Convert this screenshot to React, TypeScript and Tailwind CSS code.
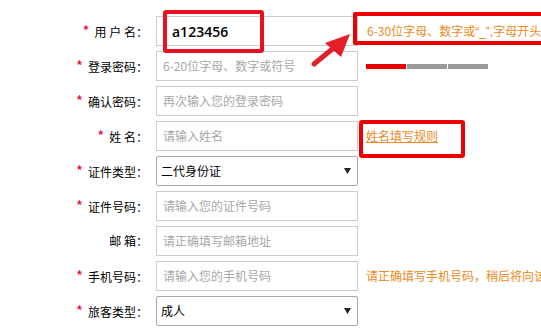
import React from "react";

type Row = {
  label: string;
  required: boolean;
  kind: "input" | "select" | "value";
  text: string;
  extra?: "hint1" | "strength" | "link" | "phone";
};

const rows: Row[] = [
  { label: "用 户 名", required: true, kind: "value", text: "a123456", extra: "hint1" },
  { label: "登录密码", required: true, kind: "input", text: "6-20位字母、数字或符号", extra: "strength" },
  { label: "确认密码", required: true, kind: "input", text: "再次输入您的登录密码" },
  { label: "姓 名", required: true, kind: "input", text: "请输入姓名", extra: "link" },
  { label: "证件类型", required: true, kind: "select", text: "二代身份证" },
  { label: "证件号码", required: true, kind: "input", text: "请输入您的证件号码" },
  { label: "邮 箱", required: false, kind: "input", text: "请正确填写邮箱地址" },
  { label: "手机号码", required: true, kind: "input", text: "请输入您的手机号码", extra: "phone" },
  { label: "旅客类型", required: true, kind: "select", text: "成人" },
];

function Field({ row }: { row: Row }) {
  if (row.kind === "select") {
    return (
      <div className="w-[202px] h-[30px] border border-[#a9a9a9] rounded-[2px] flex items-center justify-between pl-[4px] pr-[6px] text-[12px] text-black bg-white">
        <span>{row.text}</span>
        <svg width="7" height="6" viewBox="0 0 7 6">
          <polygon points="0,0 7,0 3.5,6" fill="#222" />
        </svg>
      </div>
    );
  }
  if (row.kind === "value") {
    return (
      <div className="w-[202px] h-[30px] border border-[#cccccc] flex items-center pl-[15px] text-[14px] font-semibold text-black bg-white font-['Open_Sans',sans-serif]">
        {row.text}
      </div>
    );
  }
  return (
    <div className="w-[202px] h-[30px] border border-[#cccccc] flex items-center pl-[6px] text-[12px] text-[#a8a8a8] bg-white">
      {row.text}
    </div>
  );
}

function Extra({ kind }: { kind?: Row["extra"] }) {
  if (kind === "hint1") {
    return (
      <div className="ml-[9px] text-[12px] text-[#ec8a1c] whitespace-nowrap">
        6-30位字母、数字或<span className="font-['Liberation_Sans',sans-serif]">“_”,</span>字母开头
      </div>
    );
  }
  if (kind === "strength") {
    return (
      <div className="ml-[8px] flex gap-[1px] shrink-0">
        <div className="w-[40px] h-[5px] bg-[#e60000]" />
        <div className="w-[40px] h-[5px] bg-[#999999]" />
        <div className="w-[40px] h-[5px] bg-[#999999]" />
      </div>
    );
  }
  if (kind === "link") {
    return (
      <div className="ml-[8px] text-[12px] text-[#ec8a1c] underline whitespace-nowrap">
        姓名填写规则
      </div>
    );
  }
  if (kind === "phone") {
    return (
      <div className="ml-[8px] text-[12px] text-[#ec8a1c] whitespace-nowrap">
        请正确填写手机号码，稍后将向该
      </div>
    );
  }
  return null;
}

export default function App() {
  return (
    <div className="relative w-[541px] h-[330px] overflow-hidden bg-white font-['Noto_Sans_CJK_SC',sans-serif]">
      <div className="flex flex-col gap-[5px] pt-[16px]">
        {rows.map((row, i) => (
          <div key={i} className="flex items-center h-[30px] min-w-0">
            <div className="w-[148px] shrink-0 text-right text-[12px] text-black whitespace-nowrap">
              {row.required && <span className="text-[#e8003a] text-[15px] mr-[5px]">*</span>}
              {row.label}：
            </div>
            <div className="ml-[8px] shrink-0">
              <Field row={row} />
            </div>
            <Extra kind={row.extra} />
          </div>
        ))}
      </div>

      {/* annotation overlays */}
      <div className="absolute left-[163px] top-[10px] w-[101px] h-[43px] border-[4px] border-[#e8111f] rounded-[3px]" />
      <div className="absolute left-[353px] top-[12px] w-[200px] h-[33px] border-[4px] border-[#ee0000] rounded-[2px]" />
      <div className="absolute left-[359px] top-[120px] w-[106px] h-[38px] border-[4px] border-[#ee0000] rounded-[3px]" />
      <svg className="absolute left-0 top-0" width="541" height="330" viewBox="0 0 541 330">
        <line x1="314" y1="64" x2="336" y2="46" stroke="#e3202a" strokeWidth="5" strokeLinecap="round" />
        <polygon points="350,34 325,43 341,57" fill="#e3202a" />
      </svg>
    </div>
  );
}
